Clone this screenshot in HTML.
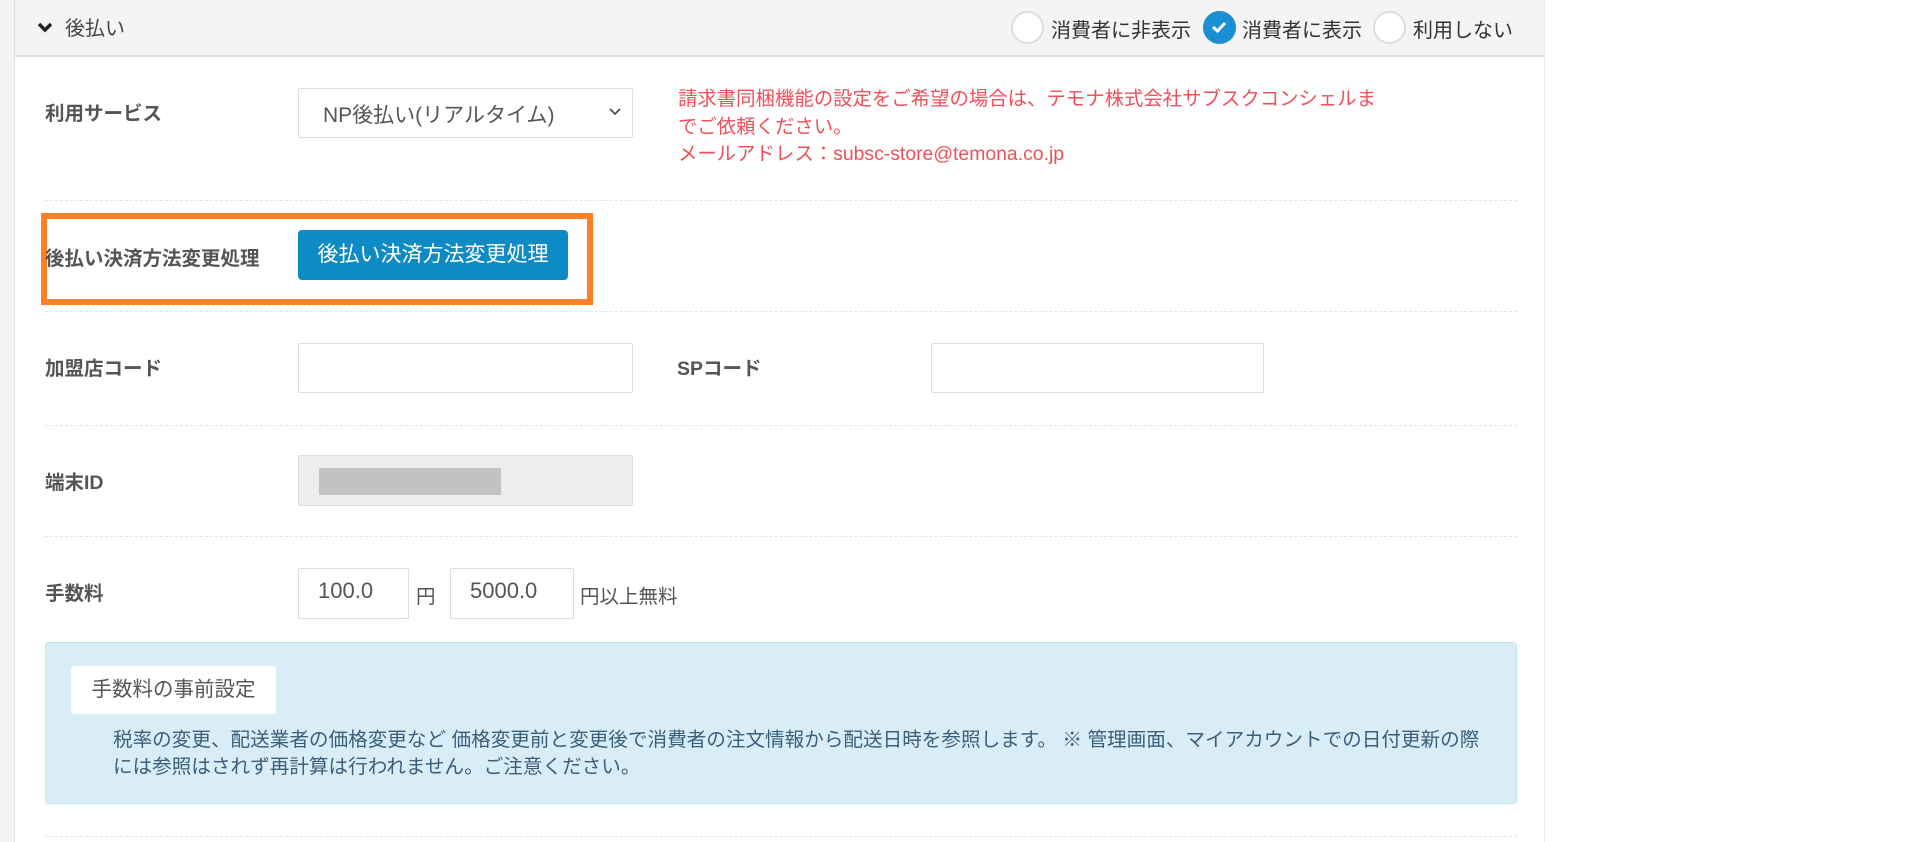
<!DOCTYPE html>
<html><head><meta charset="utf-8"><style>
*{box-sizing:border-box;margin:0;padding:0}
body{width:1920px;height:842px;background:#fff;font-family:"Liberation Sans","Noto Sans CJK JP",sans-serif;color:#555;position:relative;overflow:hidden;font-size:18px}
.a{position:absolute;white-space:nowrap}
.lbl{font-weight:bold;color:#555;font-size:19.5px}
.inp{position:absolute;border:1px solid #ddd;background:#fff;border-radius:2px}
.dash{position:absolute;left:45px;width:1472px;border-top:1px dashed #e4e4e4;height:0}
.rad{position:absolute;width:33px;height:33px;border-radius:50%;border:2px solid #ddd;background:#fff}
</style></head><body>
<div class="a" style="left:0;top:0;width:15px;height:842px;background:#f3f3f3;border-right:1px solid #e0e0e0"></div>
<div class="a" style="left:15px;top:0;width:1530px;height:57px;background:#f4f4f4;border-bottom:2px solid #e0e0e0"></div>
<div class="a" style="left:1544px;top:0;width:1px;height:842px;background:#eee"></div>
<svg class="a" style="left:37px;top:20px" width="16" height="14" viewBox="0 0 16 14"><path d="M2 4 L8 10 L14 4" stroke="#222" stroke-width="3.5" fill="none"/></svg>
<div class="a" style="left:65px;top:12px;font-size:20px;color:#444">後払い</div>
<div class="rad" style="left:1011px;top:11px"></div>
<div class="a" style="left:1051px;top:14px;font-size:20px;color:#333">消費者に非表示</div>
<div class="rad" style="left:1203px;top:11px;background:#1a8fd4;border-color:#1a8fd4"></div>
<svg class="a" style="left:1210px;top:19px" width="18" height="16" viewBox="0 0 18 16"><path d="M3 8 L7.5 12 L15 4" stroke="#fff" stroke-width="3" fill="none"/></svg>
<div class="a" style="left:1242px;top:14px;font-size:20px;color:#333">消費者に表示</div>
<div class="rad" style="left:1373px;top:11px"></div>
<div class="a" style="left:1413px;top:14px;font-size:20px;color:#333">利用しない</div>

<div class="a lbl" style="left:45px;top:97px">利用サービス</div>
<div class="inp" style="left:298px;top:88px;width:335px;height:50px"></div>
<div class="a" style="left:323px;top:99px;font-size:21px;color:#555">NP後払い(リアルタイム)</div>
<svg class="a" style="left:609px;top:107px" width="12" height="10" viewBox="0 0 12 10"><path d="M1 2 L6 7 L11 2" stroke="#444" stroke-width="1.6" fill="none"/></svg>
<div class="a" style="left:678px;top:86px;font-size:19.4px;line-height:27.5px;color:#f0505a">請求書同梱機能の設定をご希望の場合は、テモナ株式会社サブスクコンシェルま<br>でご依頼ください。<br>メールアドレス：subsc-store@temona.co.jp</div>
<div class="dash" style="top:200px"></div>

<div class="a" style="left:41px;top:213px;width:552px;height:92px;border:6px solid #ff7f27"></div>
<div class="a lbl" style="left:45px;top:242px;font-size:19.5px">後払い決済方法変更処理</div>
<div class="a" style="left:298px;top:230px;width:270px;height:50px;background:#0e8ac4;border-radius:4px;color:#fff;font-size:21px;text-align:center;line-height:50px">後払い決済方法変更処理</div>
<div class="dash" style="top:311px"></div>

<div class="a lbl" style="left:45px;top:352px">加盟店コード</div>
<div class="inp" style="left:298px;top:343px;width:335px;height:50px"></div>
<div class="a lbl" style="left:677px;top:352px">SPコード</div>
<div class="inp" style="left:931px;top:343px;width:333px;height:50px"></div>
<div class="dash" style="top:425px"></div>

<div class="a lbl" style="left:45px;top:466px">端末ID</div>
<div class="inp" style="left:298px;top:455px;width:335px;height:51px;background:#ededed"></div>
<div class="a" style="left:319px;top:468px;width:182px;height:27px;background:#c2c2c2"></div>
<div class="dash" style="top:536px"></div>

<div class="a lbl" style="left:45px;top:577px">手数料</div>
<div class="inp" style="left:298px;top:568px;width:111px;height:51px"></div>
<div class="a" style="left:318px;top:578px;font-size:22px;color:#555;width:84px;overflow:hidden">100.0</div>
<div class="a" style="left:416px;top:580px;font-size:19.5px;color:#555">円</div>
<div class="inp" style="left:450px;top:568px;width:124px;height:51px"></div>
<div class="a" style="left:470px;top:578px;font-size:22px;color:#555;width:82px;overflow:hidden">5000.0</div>
<div class="a" style="left:580px;top:580px;font-size:19.5px;color:#555">円以上無料</div>

<div class="a" style="left:45px;top:642px;width:1472px;height:162px;background:#d9edf7;border:1px solid #bce8f1;border-radius:4px"></div>
<div class="a" style="left:71px;top:666px;width:205px;height:48px;background:#fff;border-radius:3px;font-size:20.5px;color:#555;text-align:center;line-height:48px">手数料の事前設定</div>
<div class="a" style="left:113px;top:727px;font-size:19.6px;line-height:27px;color:#3a5f7a">税率の変更、配送業者の価格変更など 価格変更前と変更後で消費者の注文情報から配送日時を参照します。 ※ 管理画面、マイアカウントでの日付更新の際<br>には参照はされず再計算は行われません。ご注意ください。</div>
<div class="dash" style="top:836px"></div>
</body></html>
